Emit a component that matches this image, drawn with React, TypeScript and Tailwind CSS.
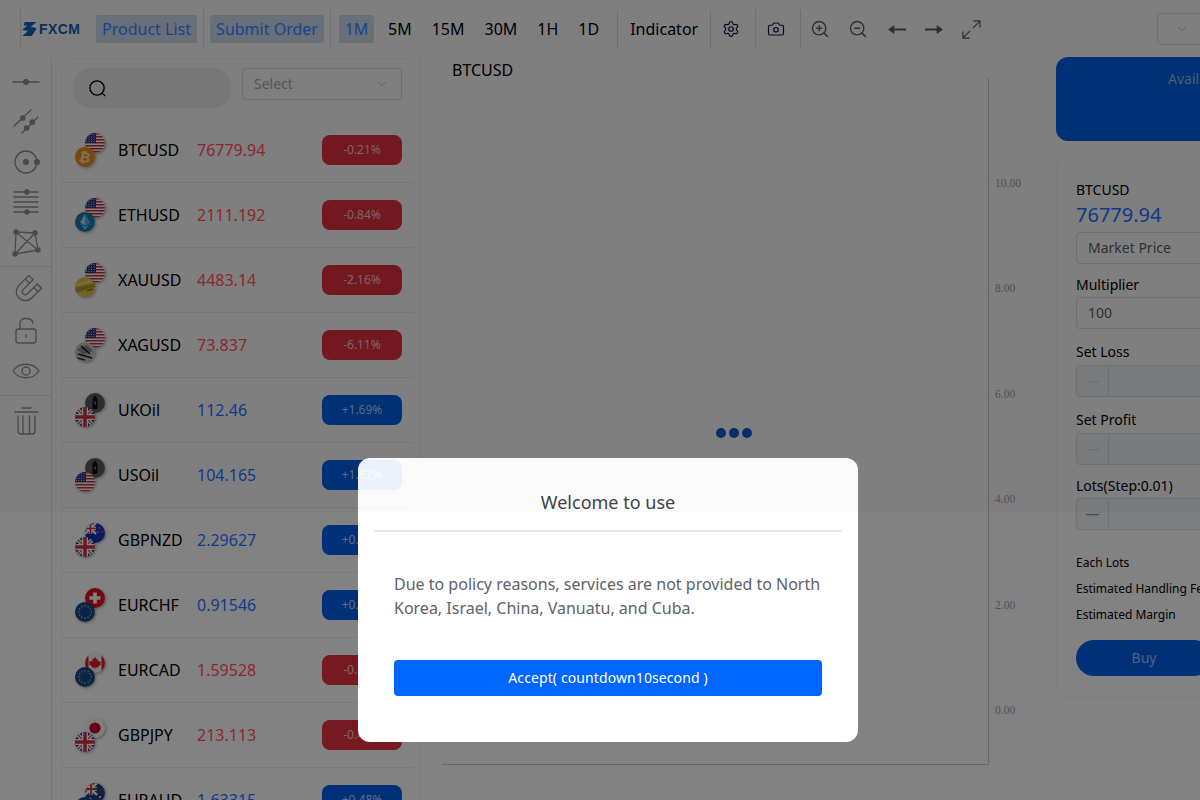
import React from "react";
import { Settings, Camera, ZoomIn, ZoomOut, ChevronDown } from "lucide-react";

const Us = () => (
  <svg viewBox="0 0 20 20" className="w-full h-full">
    <rect width="20" height="20" fill="#fff" />
    {[0, 3, 6, 9, 12, 15, 18].map((y) => (
      <rect key={y} y={y} width="20" height="1.5" fill="#c8313e" />
    ))}
    <rect width="11" height="10" fill="#2b3a86" />
    {[1.5, 4, 6.5, 9].map((x) =>
      [1.5, 4, 6.5, 8.5].map((y) => <circle key={x + "-" + y} cx={x} cy={y} r="0.5" fill="#fff" />)
    )}
  </svg>
);
const Gb = () => (
  <svg viewBox="0 0 20 20" className="w-full h-full">
    <rect width="20" height="20" fill="#27408b" />
    <path d="M0 0L20 20M20 0L0 20" stroke="#fff" strokeWidth="4" />
    <path d="M0 0L20 20M20 0L0 20" stroke="#d22f3c" strokeWidth="1.2" />
    <path d="M10 0V20M0 10H20" stroke="#fff" strokeWidth="6" />
    <path d="M10 0V20M0 10H20" stroke="#d22f3c" strokeWidth="3.4" />
  </svg>
);
const Nz = () => (
  <svg viewBox="0 0 20 20" className="w-full h-full">
    <rect width="20" height="20" fill="#1532b8" />
    <g transform="scale(.55)">
      <path d="M0 0L20 20M20 0L0 20" stroke="#fff" strokeWidth="4" />
      <path d="M10 0V20M0 10H20" stroke="#fff" strokeWidth="6" />
      <path d="M10 0V20M0 10H20" stroke="#d22f3c" strokeWidth="3" />
    </g>
    <circle cx="15" cy="5" r="0.9" fill="#e8505c" />
    <circle cx="17" cy="9" r="0.9" fill="#e8505c" />
    <circle cx="13" cy="9" r="0.9" fill="#e8505c" />
  </svg>
);
const Au = () => (
  <svg viewBox="0 0 20 20" className="w-full h-full">
    <rect width="20" height="20" fill="#1f3f80" />
    <g transform="scale(.6)">
      <path d="M0 0L20 20M20 0L0 20" stroke="#fff" strokeWidth="4" />
      <path d="M10 0V20M0 10H20" stroke="#fff" strokeWidth="6" />
      <path d="M10 0V20M0 10H20" stroke="#d22f3c" strokeWidth="3" />
    </g>
    <circle cx="5" cy="16" r="1.5" fill="#fff" />
    <circle cx="15" cy="14" r="1" fill="#fff" />
  </svg>
);
const Ch = () => (
  <svg viewBox="0 0 20 20" className="w-full h-full">
    <rect width="20" height="20" fill="#e60f14" />
    <path d="M10 4.500V15.500M4.500 10H15.500" stroke="#fff" strokeWidth="3.6" />
  </svg>
);
const Eu = () => (
  <svg viewBox="0 0 20 20" className="w-full h-full">
    <rect width="20" height="20" fill="#15478f" />
    {Array.from({ length: 12 }).map((_, i) => (
      <circle
        key={i}
        cx={10 + 6.2 * Math.cos((i * Math.PI) / 6)}
        cy={10 + 6.2 * Math.sin((i * Math.PI) / 6)}
        r="0.75"
        fill="#e8c32c"
      />
    ))}
  </svg>
);
const Ca = () => (
  <svg viewBox="0 0 20 20" className="w-full h-full">
    <rect width="20" height="20" fill="#f6f6f6" />
    <rect width="3.5" height="20" fill="#dd1f26" />
    <rect x="16.5" width="3.5" height="20" fill="#dd1f26" />
    <path d="M10 3.500l1.400 2.800 1.400-.7-.5 3 1.900-1 .4 1.300 1.600-.2-.9 2.300.6.5-3 2.200.3 1.100-2.800-.3V16h-.8v-1.600l-2.800.3.3-1.100-3-2.200.6-.5-.9-2.300 1.600.2.4-1.300 1.900 1-.5-3 1.400.7z" fill="#dd1f26" />
  </svg>
);
const Jp = () => (
  <svg viewBox="0 0 20 20" className="w-full h-full">
    <rect width="20" height="20" fill="#f8f8f8" />
    <circle cx="10" cy="10" r="5.6" fill="#c40a34" />
  </svg>
);
const Btc = () => (
  <svg viewBox="0 0 20 20" className="w-full h-full">
    <rect width="20" height="20" fill="#ef8f1c" />
    <text x="10" y="15" textAnchor="middle" fontSize="14" fontWeight="700" fill="#ffe3bd" fontFamily="Liberation Sans, sans-serif" transform="rotate(12 10 10)">₿</text>
  </svg>
);
const Eth = () => (
  <svg viewBox="0 0 20 20" className="w-full h-full">
    <rect width="20" height="20" fill="#1a7fb3" />
    <path d="M10 2.500L15 10.500 10 13.500 5 10.500z" fill="#a9e2f5" />
    <path d="M10 14.800L15 11.800 10 18 5 11.800z" fill="#6cc7e8" />
    <path d="M10 2.500V13.500L15 10.500z" fill="#4fb0d8" />
  </svg>
);
const Gold = () => (
  <svg viewBox="0 0 20 20" className="w-full h-full">
    <rect width="20" height="20" fill="#e3c548" />
    <path d="M0 11L20 6V10L0 16z" fill="#b89a2c" />
    <path d="M2 8L16 4" stroke="#f7e48c" strokeWidth="1.5" />
    <path d="M12 14L18 12" stroke="#8b7420" strokeWidth="1.6" />
  </svg>
);
const Silver = () => (
  <svg viewBox="0 0 20 20" className="w-full h-full">
    <rect width="20" height="20" fill="#c9c9c9" />
    <path d="M2 7L12 3L18 9L8 13z" fill="#8c8c8c" />
    <path d="M3 12L17 16M6 4L15 12" stroke="#1c1c1c" strokeWidth="1.6" />
    <path d="M2 16L10 18" stroke="#333" strokeWidth="1.5" />
  </svg>
);
const Oil = () => (
  <svg viewBox="0 0 20 20" className="w-full h-full">
    <rect width="20" height="20" fill="#5c5c5c" />
    <rect x="7.5" y="5" width="5" height="11" rx="1" fill="#111" />
    <rect x="8.7" y="2.8" width="2.6" height="2.6" fill="#111" />
    <rect x="9.3" y="8.5" width="1.6" height="3" fill="#777" />
  </svg>
);

const Coin = ({ children, className }: { children: React.ReactNode; className: string }) => (
  <span className={"absolute w-5 h-5 rounded-full overflow-hidden shadow-[1px_1px_3px_rgba(0,0,0,0.35)] " + className}>
    {children}
  </span>
);

type Row = { n: string; p: string; c: string; up: boolean; a: React.ReactNode; b: React.ReactNode };
const rows: Row[] = [
  { n: "BTCUSD", p: "76779.94", c: "-0.21%", up: false, a: <Us />, b: <Btc /> },
  { n: "ETHUSD", p: "2111.192", c: "-0.84%", up: false, a: <Us />, b: <Eth /> },
  { n: "XAUUSD", p: "4483.14", c: "-2.16%", up: false, a: <Us />, b: <Gold /> },
  { n: "XAGUSD", p: "73.837", c: "-6.11%", up: false, a: <Us />, b: <Silver /> },
  { n: "UKOil", p: "112.46", c: "+1.69%", up: true, a: <Oil />, b: <Gb /> },
  { n: "USOil", p: "104.165", c: "+1.82%", up: true, a: <Oil />, b: <Us /> },
  { n: "GBPNZD", p: "2.29627", c: "+0.33%", up: true, a: <Nz />, b: <Gb /> },
  { n: "EURCHF", p: "0.91546", c: "+0.12%", up: true, a: <Ch />, b: <Eu /> },
  { n: "EURCAD", p: "1.59528", c: "-0.25%", up: false, a: <Ca />, b: <Eu /> },
  { n: "GBPJPY", p: "213.113", c: "-0.40%", up: false, a: <Jp />, b: <Gb /> },
  { n: "EURAUD", p: "1.63315", c: "+0.48%", up: true, a: <Au />, b: <Eu /> },
];

const Sep = ({ className }: { className: string }) => (
  <span className={"block w-px h-[38px] bg-[#e2e2e2] shrink-0 " + className} />
);
const Tab = ({ children, active, className }: { children: string; active?: boolean; className?: string }) => (
  <span
    className={
      "h-7 flex items-center justify-center rounded-[2px] text-base shrink-0 " +
      (active ? "bg-[#d3e0f2] " : "") +
      (className || "")
    }
  >
    <span className={active ? "relative z-20 text-[#1a4690]" : "text-black"}>{children}</span>
  </span>
);

const s = { stroke: "#8d9298", strokeWidth: 1.3, fill: "none", strokeLinecap: "round" as const, strokeLinejoin: "round" as const };
const d = "#8d9298";
const SideIcon = ({ children }: { children: React.ReactNode }) => (
  <div className="h-10 flex items-center justify-center">
    <svg viewBox="0 0 36 36" className="w-9 h-9" {...s}>{children}</svg>
  </div>
);

const Field = ({ children, mt }: { children: React.ReactNode; mt: string }) => (
  <div className={"w-[136px] h-8 rounded border border-[#dcdfe6] flex items-center pl-[11px] text-sm text-[#606266] bg-white whitespace-nowrap " + mt}>
    {children}
  </div>
);
const Stepper = ({ mt, dash }: { mt: string; dash: string }) => (
  <div className={"w-[136px] h-8 rounded border border-[#dcdfe6] flex overflow-hidden bg-[#f5f7fa] " + mt}>
    <div className={"w-8 border-r border-[#dcdfe6] flex items-center justify-center text-sm " + dash}>—</div>
  </div>
);
const Label = ({ children, mt }: { children: string; mt: string }) => (
  <div className={"text-sm leading-5 text-black whitespace-nowrap " + mt}>{children}</div>
);
const Small = ({ children, mt }: { children: string; mt: string }) => (
  <div className={"text-xs leading-4 text-black whitespace-nowrap " + mt}>{children}</div>
);

const ticks: [string, number][] = [
  ["10.00", 105],
  ["8.00", 210],
  ["6.00", 316],
  ["4.00", 421],
  ["2.00", 527],
  ["0.00", 632],
];

export default function App() {
  return (
    <div className="relative w-[1200px] h-[800px] overflow-hidden bg-white font-['Noto_Sans',sans-serif]">
      <header className="h-[58px] flex items-start pt-[10px]">
        <div className="ml-5 flex items-center h-[38px] w-[76px] shrink-0 border-l border-[#e2e2e2]">
          <svg viewBox="0 0 15 16" className="w-[15px] h-4 ml-px">
            <path d="M2.500 1H14.500L8 6.500C11 6 14 6.500 14.500 8L9.500 15H.5L6.500 9.500C4 10 1.500 9.500.5 8.500L5.500 4.500H2z" fill="#1463b8" />
          </svg>
          <span className="ml-[2px] text-[14px] font-bold leading-none tracking-[0.4px] text-[#1463b8] font-['Liberation_Sans',sans-serif]">FXCM</span>
        </div>
        <div className="flex items-center h-[38px]">
          <Tab active className="w-[101px]">Product List</Tab>
          <Sep className="ml-[6px]" />
          <Tab active className="w-[114px] ml-[6px]">Submit Order</Tab>
          <Sep className="ml-[6px]" />
          <Tab active className="w-[35px] ml-2">1M</Tab>
          <Tab className="ml-[14px]">5M</Tab>
          <Tab className="ml-5">15M</Tab>
          <Tab className="ml-5">30M</Tab>
          <Tab className="ml-5">1H</Tab>
          <Tab className="ml-5">1D</Tab>
          <Sep className="ml-[18px]" />
          <Tab className="ml-3">Indicator</Tab>
          <Sep className="ml-3" />
          <Settings className="w-[18px] h-[18px] ml-[11px] text-[#0b1442]" strokeWidth={1.6} />
          <Sep className="ml-[15px]" />
          <Camera className="w-[18px] h-[18px] ml-[11px] text-[#0b1442]" strokeWidth={1.6} />
          <Sep className="ml-[15px]" />
          <ZoomIn className="w-5 h-5 ml-[9px] text-[#5f5f5f]" strokeWidth={1.7} />
          <ZoomOut className="w-5 h-5 ml-[18px] text-[#5f5f5f]" strokeWidth={1.7} />
          <svg viewBox="0 0 20 12" className="w-[18px] h-[11px] ml-5" fill="#5f5f5f">
            <path d="M0 6L7 1V5H20V7H7V11z" />
          </svg>
          <svg viewBox="0 0 20 12" className="w-[18px] h-[11px] ml-[19px]" fill="#5f5f5f">
            <path d="M20 6L13 1V5H0V7H13V11z" />
          </svg>
          <svg viewBox="0 0 20 20" className="w-[19px] h-[19px] ml-[19px]" fill="none" stroke="#5f5f5f" strokeWidth="1.3">
            <path d="M12 1H19V8M19 1L11.500 8.500M8 19H1V12M1 19L8.500 11.500" />
          </svg>
        </div>
        <div className="absolute left-[1157px] top-[13px] w-[60px] h-8 rounded border border-[#dcdfe6] bg-white flex items-center pl-[17px]">
          <ChevronDown className="w-[14px] h-[14px] text-[#b8b8b8]" strokeWidth={1.4} />
        </div>
      </header>

      <main className="flex h-[742px]">
        <aside className="w-[52px] shrink-0 border-r border-[#e6e6e6] pt-1">
          <SideIcon>
            <path d="M5 18H31" />
            <circle cx="18" cy="18" r="2.4" fill={d} />
          </SideIcon>
          <SideIcon>
            <path d="M6 22L23 6M14 29L30 13" />
            <circle cx="14.700" cy="14" r="2.200" fill={d} />
            <circle cx="24.300" cy="18" r="2.200" fill={d} />
            <circle cx="18.700" cy="24" r="2.200" fill={d} />
          </SideIcon>
          <SideIcon>
            <circle cx="18" cy="18" r="11" />
            <circle cx="18" cy="18" r="2.4" fill={d} />
            <circle cx="29" cy="18" r="2.4" fill={d} />
          </SideIcon>
          <SideIcon>
            <path d="M6 8H30M6 13H30M6 18H30M6 23H30M6 28H30" />
            <circle cx="19" cy="8" r="2" fill={d} />
            <circle cx="19" cy="28" r="2" fill={d} />
          </SideIcon>
          <SideIcon>
            <path d="M8 8L27 9L30 26L7 30zM8 8L30 26M27 9L7 30" />
            <circle cx="8" cy="8" r="2" fill={d} />
            <circle cx="27" cy="9" r="2" fill={d} />
            <circle cx="30" cy="26" r="2" fill={d} />
            <circle cx="7" cy="30" r="2" fill={d} />
          </SideIcon>
          <div className="h-px bg-[#e6e6e6] my-1" />
          <SideIcon>
            <g transform="rotate(45 18 18)">
              <path d="M9 5V19a9 9 0 0 0 18 0V5h-6V19a3 3 0 0 1-6 0V5zM9 10h6M21 10h6" />
            </g>
          </SideIcon>
          <SideIcon>
            <rect x="8" y="16" width="20" height="14" rx="2.5" />
            <path d="M12 16V10C12 4 24 4 25 10" />
            <path d="M18 22V24" />
          </SideIcon>
          <SideIcon>
            <path d="M5 18C11 9 25 9 31 18C25 27 11 27 5 18z" />
            <circle cx="18" cy="18" r="4" />
          </SideIcon>
          <div className="h-px bg-[#e6e6e6] mt-1 mb-[5px]" />
          <SideIcon>
            <path d="M7 9H30M14 5H23M10 13V28C10 30 11 31 13 31H24C26 31 27 30 27 28V13M15 13V31M21.500 13V31" />
          </SideIcon>
        </aside>

        <section className="ml-[9px] w-[352px] shrink-0 border-l border-t border-[#f5f5f5] rounded-t-lg">
          <div className="h-[59px] pt-[9px] pl-[10px] flex items-start">
            <div className="w-40 h-10 rounded-full bg-[#f1f1f1] flex items-center pl-4">
              <svg viewBox="0 0 20 20" className="w-[19px] h-[19px]" fill="none" stroke="#000" strokeWidth="1.5">
                <circle cx="9.500" cy="9.500" r="7.500" />
                <path d="M15 15L18 18" />
              </svg>
            </div>
            <div className="ml-[10px] w-40 h-8 rounded border border-[#dcdfe6] flex items-center justify-between pl-[11px] pr-3 text-sm text-[#a8abb2]">
              Select
              <ChevronDown className="w-[14px] h-[14px] text-[#b8b8b8]" strokeWidth={1.4} />
            </div>
          </div>
          {rows.map((r) => (
            <div key={r.n} className="h-[65px] border-b border-[#eeeeee] flex items-center pl-[13px] pr-[11px]">
              <span className="relative w-[30px] h-[34px] shrink-0">
                <Coin className="left-[10px] top-0">{r.a}</Coin>
                <Coin className="left-0 top-[14px]">{r.b}</Coin>
              </span>
              <span className="ml-[13px] w-[79px] text-base text-black">{r.n}</span>
              <span className={"relative z-20 text-base " + (r.up ? "text-[#103a8c]" : "text-[#8e2730]")}>{r.p}</span>
              <span className={"ml-auto w-20 h-[30px] rounded-lg flex items-center justify-center text-xs text-white/75 " + (r.up ? "bg-[#0060ec]" : "bg-[#e8323f]")}>
                {r.c}
              </span>
            </div>
          ))}
        </section>

        <section className="relative ml-[6px] w-[629px] shrink-0 border-l border-[#f5f5f5]">
          <div className="h-5 pl-[32px] text-base leading-6 text-black">BTCUSD</div>
          <svg width="628" height="722" className="block">
            <path d="M568.500 0V686.500H22" fill="none" stroke="#cfcfcf" />
            {ticks.map(([t, y]) => (
              <g key={t}>
                <path d={`M22 ${y + 0.5}H573`} stroke="#ececec" strokeDasharray="1 3" />
                <text x="575" y={y + 4} fontSize="11.5" fill="#a3a3a3" fontFamily="'Liberation Serif', serif">{t}</text>
              </g>
            ))}
          </svg>
          <div className="absolute left-[296px] top-[370px] flex gap-[3px]">
            <span className="w-[10px] h-[10px] rounded-full bg-[#0a5fd4]" />
            <span className="w-[10px] h-[10px] rounded-full bg-[#0a5fd4]" />
            <span className="w-[10px] h-[10px] rounded-full bg-[#0a5fd4]" />
          </div>
        </section>

        <section className="ml-2 w-[300px] shrink-0 -mt-px">
          <div className="h-[84px] rounded-xl bg-[#0060ec] pl-[112px] pt-3 text-sm leading-5 text-white/60">Available</div>
          <div className="mt-[17px] h-[539px] rounded-lg border border-[#f7f7f7] pl-[19px] pt-[21px]">
            <Label mt="">BTCUSD</Label>
            <div className="mt-px text-xl leading-7 relative z-20 text-[#103a8c]">76779.94</div>
            <Field mt="mt-[3px]">Market Price</Field>
            <Label mt="mt-[11px]">Multiplier</Label>
            <Field mt="mt-[2px]">100</Field>
            <Label mt="mt-[13px]">Set Loss</Label>
            <Stepper mt="mt-[3px]" dash="text-[#e0e2e6]" />
            <Label mt="mt-[13px]">Set Profit</Label>
            <Stepper mt="mt-[3px]" dash="text-[#e0e2e6]" />
            <Label mt="mt-[11px]">Lots(Step:0.01)</Label>
            <Stepper mt="mt-[2px]" dash="text-[#909399]" />
            <Small mt="mt-[25px]">Each Lots</Small>
            <Small mt="mt-[10px]">Estimated Handling Fee</Small>
            <Small mt="mt-[10px]">Estimated Margin</Small>
            <div className="mt-[17px] w-[136px] h-9 rounded-full bg-[#0060ec] flex items-center justify-center text-sm text-white/60">Buy</div>
          </div>
        </section>
      </main>

      <div className="absolute inset-0 z-10 bg-black/[0.49]" />

      <div className="absolute z-30 left-[358px] top-[458px] w-[500px] h-[284px] rounded-xl bg-white px-4">
        <div className="h-[74px] border-b-2 border-[#e8e8ea] flex items-end justify-center pb-[16px] text-lg leading-6 text-[#444]">
          Welcome to use
        </div>
        <p className="mt-[40px] px-5 text-base leading-6 text-[#606266]">
          Due to policy reasons, services are not provided to North Korea, Israel, China, Vanuatu, and Cuba.
        </p>
        <div className="mt-[40px] mx-5 h-9 rounded bg-[#0066ff] flex items-center justify-center text-sm tracking-[0.1px] text-white">
          Accept( countdown10second )
        </div>
      </div>

      <div className="absolute z-40 left-0 top-0 w-full h-[512px] bg-black/[0.02] pointer-events-none">
        <div className="absolute left-[358px] top-[458px] w-[500px] h-[54px] overflow-hidden rounded-t-xl">
          <div className="absolute left-[-36px] top-[2px] w-20 h-[30px] rounded-lg bg-[#0066ff]/[0.06] flex items-center justify-center text-xs text-white/70">+1.82%</div>
          <div className="absolute left-0 top-[49px] w-[55px] h-px bg-black/[0.02]" />
        </div>
      </div>
    </div>
  );
}
